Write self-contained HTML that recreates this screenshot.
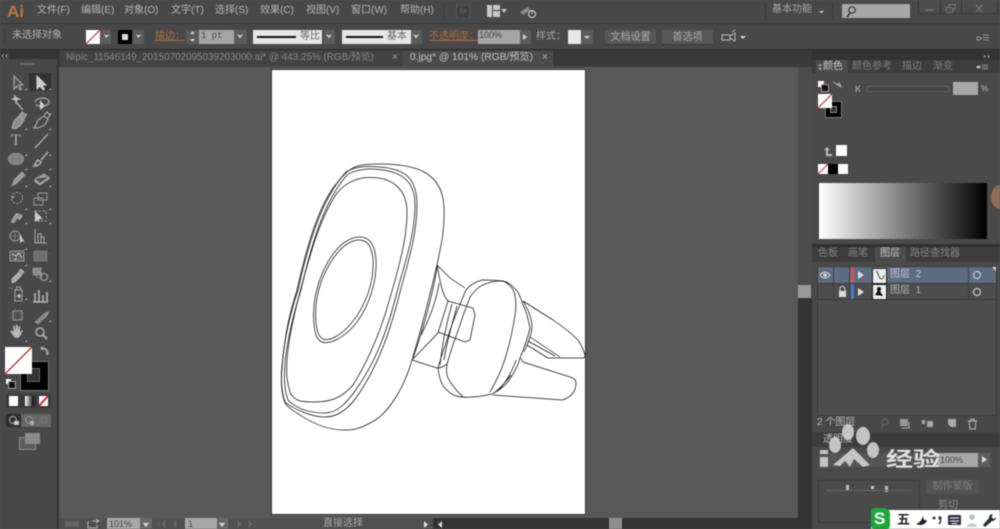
<!DOCTYPE html>
<html><head><meta charset="utf-8">
<style>
html,body{margin:0;padding:0;background:#595959;}
#r{position:relative;width:1000px;height:529px;overflow:hidden;background:#595959;font-family:"Liberation Sans","Noto Sans CJK SC",sans-serif;font-size:10px;color:#c4c4c4;filter:blur(.4px);}
#r div{position:absolute;}
.t{white-space:nowrap;line-height:12px;}
svg{position:absolute;overflow:visible;}
</style></head><body>
<div id="r">
<!-- menu bar -->
<div style="left:0;top:0;width:1000px;height:23px;background:#484848"></div>
<div style="left:0;top:23px;width:1000px;height:1px;background:#333"></div>
<div class="t" style="left:7px;top:2px;font-size:17px;line-height:20px;font-weight:bold;color:#b5794a">Ai</div>
<div class="t" style="left:37px;top:5px;color:#b5b5b5">文件(F)</div>
<div class="t" style="left:81px;top:5px;color:#b5b5b5">编辑(E)</div>
<div class="t" style="left:124px;top:5px;color:#b5b5b5">对象(O)</div>
<div class="t" style="left:171px;top:5px;color:#b5b5b5">文字(T)</div>
<div class="t" style="left:215px;top:5px;color:#b5b5b5">选择(S)</div>
<div class="t" style="left:260px;top:5px;color:#b5b5b5">效果(C)</div>
<div class="t" style="left:306px;top:5px;color:#b5b5b5">视图(V)</div>
<div class="t" style="left:351px;top:5px;color:#b5b5b5">窗口(W)</div>
<div class="t" style="left:400px;top:5px;color:#b5b5b5">帮助(H)</div>
<div style="left:443px;top:4px;width:1px;height:15px;background:#3c3c3c"></div>
<div class="t" style="left:456px;top:5px;width:12px;height:12px;background:#414141;border:1px solid #555;color:#666;font-size:7px;text-align:center">Br</div>
<div style="left:487px;top:5px;width:13px;height:12px;background:#c8c8c8"></div>
<div style="left:492px;top:5px;width:1px;height:12px;background:#444"></div>
<div style="left:493px;top:10px;width:7px;height:1px;background:#444"></div>
<svg style="left:0;top:0" width="1000" height="24">
<path d="M501 9h6l-3 4z" fill="#c4c4c4"/>
<path d="M520 12l8-5 2 3-7 5z" fill="#8a8a8a"/>
<circle cx="532" cy="14" r="3.500" fill="none" stroke="#c4c4c4" stroke-width="1.200"/><path d="M532 10v4" stroke="#c4c4c4"/>
<path d="M819 11h5l-2.500 2.500z" fill="#c4c4c4"/>
</svg>
<div class="t" style="left:772px;top:4px;color:#a8a8a8">基本功能</div>
<div style="left:765px;top:4px;width:1px;height:15px;background:#3c3c3c"></div>
<div style="left:832px;top:4px;width:1px;height:15px;background:#3c3c3c"></div>
<div style="left:842px;top:4px;width:68px;height:14px;background:#a6a6a6"></div>
<svg style="left:845px;top:5px" width="14" height="14"><circle cx="7" cy="5" r="3.200" fill="none" stroke="#333" stroke-width="1.200"/><path d="M5 8l-3 4" stroke="#333" stroke-width="1.500"/></svg>
<div style="left:918px;top:0;width:80px;height:14px;background:#4c4c4c;border:1px solid #3a3a3a;border-top:0;border-radius:0 0 2px 2px;box-sizing:border-box"></div>
<div style="left:940px;top:0;width:1px;height:14px;background:#3a3a3a"></div>
<div style="left:961px;top:0;width:1px;height:14px;background:#3a3a3a"></div>
<div style="left:925px;top:9px;width:8px;height:2px;background:#6e6e6e"></div>
<svg style="left:946px;top:4px" width="40" height="10"><path d="M0.500 3.500h6v5h-6zM3 3V0.500h6v5H7" fill="none" stroke="#767676"/><path d="M30 1l6 7M36 1l-6 7" stroke="#767676" stroke-width="1.300"/></svg>
<!-- control bar -->
<div style="left:0;top:24px;width:1000px;height:26px;background:#484848"></div>
<div style="left:0;top:49px;width:1000px;height:1px;background:#2e2e2e"></div>
<div style="left:4px;top:29px;width:1px;height:15px;background:#3a3a3a"></div>
<div class="t" style="left:12px;top:30px;color:#b0b0b0">未选择对象</div>
<div style="left:86px;top:30px;width:14px;height:14px;background:#fff"></div>
<svg style="left:86px;top:30px" width="14" height="14"><path d="M0 14L14 0" stroke="#c8363b" stroke-width="1.200"/></svg>
<div style="left:101px;top:30px;width:10px;height:14px;background:#5d5d5d"></div>
<div style="left:118px;top:30px;width:14px;height:14px;background:#000"></div>
<div style="left:122px;top:34px;width:6px;height:6px;background:#ddd"></div>
<div style="left:133px;top:30px;width:11px;height:14px;background:#5d5d5d"></div>
<div class="t" style="left:155px;top:31px;color:#a8703c;text-decoration:underline">描边：</div>
<div style="left:186px;top:30px;width:13px;height:14px;background:#5a5a5a"></div>
<div class="t" style="left:199px;top:30px;width:35px;height:14px;background:#a5a5a5;color:#444;font-size:9px;padding-left:2px;box-sizing:border-box;line-height:13px;font-family:'Liberation Mono',monospace">1 pt</div>
<div style="left:234px;top:30px;width:13px;height:14px;background:#5c5c5c"></div>
<div style="left:253px;top:30px;width:69px;height:14px;background:#e6e6e6"></div>
<div style="left:257px;top:36px;width:39px;height:2px;background:#111"></div>
<div class="t" style="left:300px;top:31px;color:#666">等比</div>
<div style="left:324px;top:30px;width:11px;height:14px;background:#5c5c5c"></div>
<div style="left:342px;top:30px;width:69px;height:14px;background:#e6e6e6"></div>
<div style="left:346px;top:36px;width:37px;height:2px;background:#111"></div>
<div class="t" style="left:387px;top:31px;color:#666">基本</div>
<div style="left:411px;top:30px;width:11px;height:14px;background:#5c5c5c"></div>
<div class="t" style="left:429px;top:31px;color:#a8703c;text-decoration:underline">不透明度：</div>
<div class="t" style="left:478px;top:30px;width:42px;height:14px;background:#a5a5a5;color:#444;font-size:9px;line-height:11px;padding-left:1px;box-sizing:border-box">100%</div>
<div style="left:520px;top:30px;width:11px;height:14px;background:#5c5c5c"></div>
<div class="t" style="left:536px;top:31px;color:#a8a8a8">样式：</div>
<div style="left:568px;top:30px;width:13px;height:14px;background:#e8e8e8"></div>
<div style="left:582px;top:30px;width:11px;height:14px;background:#5c5c5c"></div>
<div class="t" style="left:605px;top:30px;width:51px;height:14px;background:#585858;border-bottom:1px solid #383838;text-align:center;color:#aaa;line-height:15px">文档设置</div>
<div class="t" style="left:662px;top:30px;width:51px;height:14px;background:#585858;border-bottom:1px solid #383838;text-align:center;color:#aaa;line-height:15px">首选项</div>
<svg style="left:0;top:24px" width="1000" height="26">
<path d="M104 11h5l-2.500 3zM136 11h5l-2.500 3zM237 11h6l-3 3zM326 11h6l-3 3zM413 11h6l-3 3zM584 12h6l-3 3zM523 10v6l4-3zM740 12h6l-3 3z" fill="#d0d0d0"/>
<path d="M190 10l2.500-3 2.500 3zM190 15l2.500 3 2.500-3z" fill="#ccc"/>
<path d="M722 11h8v5h-8zM730 12l5-3v8l-5-3M732 8l3-2" fill="none" stroke="#bdbdbd"/>
<path d="M977 13h3l1.500 1.500-1.500 1.500h-3zM983 11h6M983 13.500h6M983 16h6" stroke="#aaa" fill="none" stroke-width=".8"/>
</svg>
<!-- tab bar -->
<div style="left:0;top:50px;width:812px;height:17px;background:#3a3a3a"></div>
<div style="left:60px;top:51px;width:343px;height:16px;background:#424242"></div>
<div style="left:403px;top:51px;width:150px;height:16px;background:#4b4b4b"></div>
<div class="t" style="left:66px;top:52px;color:#858585;font-size:9.900px">Nipic_11546149_20150702095039203000.ai* @ 443.25% (RGB/预览)</div>
<div class="t" style="left:392px;top:52px;color:#aaa;font-size:10px">×</div>
<div class="t" style="left:410px;top:52px;color:#c4c4c4;font-size:10.200px">0.jpg* @ 101% (RGB/预览)</div>
<div class="t" style="left:542px;top:52px;color:#bbb;font-size:10px">×</div>
<!-- canvas -->
<div style="left:58px;top:67px;width:740px;height:451px;background:#595959"></div>
<div style="left:272px;top:70px;width:313px;height:444px;background:#fff;box-shadow:0 0 0 1px #333"></div>
<svg style="left:0;top:0" width="1000" height="529" fill="none" stroke="#111" stroke-width=".75">
<!-- outer -->
<path d="M380 164C412 164 443 170 444 208C445 232 440 250 437 265C430 295 421 330 412 360C404 388 388 415 370 423C358 430 350 430 345 430C330 430 315 425 300 415C290 409 285 405 284 400C281 390 281 378 282 368C283 350 287 327 290 315C292 305 295 297 297 290C306 250 318 205 337 183C343 175 350 168 358 166C366 164 372 164 380 164Z"/>
<!-- ring 2 -->
<path d="M346 172C355 166 368 166 380 167C405 169 417 178 417 205C417 235 408 262 400 292C392 325 380 362 360 392C350 408 338 417 325 417C312 417 295 410 285 402C281 390 281 375 282 365C285 335 290 315 298 290C307 250 320 200 346 172Z"/>
<path d="M347 175C356 169 370 168 383 170C403 173 415 182 415 205C415 235 405 262 397 292C389 325 377 360 357 388C347 403 337 413 325 413C312 413 298 410 288 400C284 390 284 375 285 362C288 335 294 312 301 290C310 250 323 202 347 175Z"/>
<!-- inner ring -->
<path d="M370 177.500C393 177 407 190 407 212C407 240 398 270 390 298C384 320 372 355 353 385C342 398 330 402 315 402C303 402 294 402 290 392C286 380 286 365 288 350C291 325 298 298 306 270C313 245 322 215 337 193C345 183 358 177 370 177.500Z"/>
<!-- ellipse -->
<path d="M360 237C372 237 377 250 376 268C375 290 365 315 350 330C338 341 328 344 322 342C313 339 313 320 314 305C316 285 325 262 338 248C346 240 354 237 360 237Z"/>
<path d="M359 240C370 240 374 252 373 268C372 290 362 312 348 327C337 338 328 341 323 339C316 336 315 320 316 305C318 285 327 264 340 250C347 243 354 240 359 240Z"/>
<!-- cone -->
<path d="M437 265C436 280 425 325 413 358M437 265C440 280 442 295 448 301L438 333L413 359M437 265L450 278L465 288M439 283C437 300 428 322 421 335M412 360L437 368C441 368 445 366 447 364"/>
<!-- neck -->
<path d="M448 301L473 308L475 315L470 340L465 342L438 332M452 304C446 325 442 345 440 365M457 306C452 325 447 340 444 360"/>
<!-- clip outer ring -->
<path d="M482 280C472 283 467 288 465 292C460 305 452 322 447 340C443 352 440 360 438 368C439 378 442 385 445 388C450 394 456 397 463 397C472 398 483 396 492 394C500 390 503 387 507 383C513 375 518 366 520 358C524 348 528 338 530 328C528 318 526 310 523 305C521 298 519 295 518 292C512 285 508 282 503 281C495 280 488 280 482 280Z"/>
<!-- clip face -->
<path d="M488 283C480 285 475 290 470 297C466 308 462 318 460 325C454 342 449 355 447 365C446 372 447 376 448 378C452 386 458 392 463 397M503 281C510 284 514 290 515 295C516 302 516 310 515 315C513 328 510 342 507 352C503 368 497 380 490 392M488 283C493 281 498 281 503 281"/>
<path d="M511 375C505 383 499 389 494 393M516 360C512 372 506 382 498 391"/>
<!-- arms -->
<path d="M523 301L553 320C565 328 572 334 578 340C582 346 584 351 585 355C585 357 584 358 583 358L573 358M523 301C527 308 531 315 532 325C532 330 531 334 530 337"/>
<path d="M530 337L560 357M528 341L555 356M527 345L548 358L573 358M530 337L527 345M524 352L527 345"/>
<path d="M523 362L570 377C574 378 576 380 576 383C576 387 575 390 573 393C570 397 566 399 562 400L493 395M521 358L523 362"/>
</svg>
<!-- bottom status -->
<div style="left:58px;top:518px;width:740px;height:11px;background:#505050"></div>
<div class="t" style="left:107px;top:518px;width:33px;height:11px;background:#a8a8a8;color:#444;font-size:9px;padding-left:2px;box-sizing:border-box">101%</div>
<div style="left:140px;top:518px;width:12px;height:11px;background:#686868"></div>
<div class="t" style="left:185px;top:518px;width:32px;height:11px;background:#a8a8a8;color:#444;font-size:9px;padding-left:3px;box-sizing:border-box">1</div>
<div style="left:217px;top:518px;width:11px;height:11px;background:#686868"></div>
<div class="t" style="left:323px;top:518px;color:#a8a8a8;font-size:10px">直接选择</div>
<div style="left:433px;top:518px;width:365px;height:11px;background:#333"></div>
<div style="left:609px;top:518px;width:13px;height:11px;background:#8f8f8f"></div>
<svg style="left:0;top:518px" width="800" height="11">
<path d="M424 3v7l4-3.500zM442 3l-4 3.500 4 3.500z" fill="#ddd"/>
<rect x="65" y="3" width="14" height="6" fill="#646464"/>
<path d="M88 3v7h9V7M92 3h6M96 1l3 2-3 2" stroke="#b5b5b5" fill="none"/>
<path d="M143 5h6l-3 4zM219 5h6l-3 4z" fill="#ddd"/>
<path d="M159 3v6M165 3l-3 3 3 3zM176 3l-3 3 3 3zM238 3l3 3-3 3zM249 3l3 3-3 3zM255 3v6" fill="#6a6a6a" stroke="#6a6a6a" stroke-width=".6"/>
</svg>
<!-- vscroll -->
<div style="left:798px;top:67px;width:14px;height:462px;background:#444"></div>
<div style="left:798px;top:67px;width:14px;height:218px;background:#4c4c4c"></div>
<div style="left:798px;top:285px;width:13px;height:13px;background:#9a9a9a"></div>
<div style="left:798px;top:298px;width:14px;height:231px;background:#333"></div>
<!-- left tools -->
<div style="left:0;top:50px;width:57px;height:479px;background:#484848"></div>
<div style="left:0;top:50px;width:57px;height:9px;background:#353535"></div>
<div style="left:57px;top:50px;width:2px;height:479px;background:#333"></div>
<div style="left:20px;top:63px;width:15px;height:2px;background:#6a6a6a"></div>
<div style="left:29px;top:73px;width:22px;height:18px;background:#343434"></div>
<svg style="left:0;top:50px" width="57" height="479" fill="none" stroke="#adadad">
<path d="M4 4l-2 2 2 2M8 4L6 6l2 2" stroke="#aaa" stroke-width=".8"/>
<g stroke="#3c3c3c"><path d="M7 62.500h44M7 140.500h44M7 200.500h44M7 247.500h44" stroke-width=".7"/></g>
<path d="M14 26v13l3-3 3 4 1.500-1-2.500-4h4z" fill="#555"/>
<path d="M37 26v13l3-3 3 4 1.500-1-2.500-4h4z" fill="#cfcfcf" stroke="#cfcfcf"/>
<path d="M16 52l7 8" stroke-width="1.500"/><path d="M14 45l1 3-3 1 3 1 1 3 1-3 3-1-3-1z" fill="#ccc"/>
<path d="M35 52c2-5 12-5 14-1 1 4-8 7-13 4" stroke-width="1.300"/><path d="M40 50v10l5-4z" fill="#ccc" stroke="none"/>
<path d="M12 78l2-7 5-5 5 4-4 6-5 3zM19 66l3-4 4 3-2 4" fill="#8e8e8e" stroke-width="1"/>
<path d="M33 78c3 0 3-5 5-8l6-4 4 3-3 6-7 3zM44 65l3-3 3 3-2 3" stroke-width="1.100"/>
<text x="11" y="95" font-family="Liberation Serif" font-size="16" fill="#adadad" stroke="none">T</text>
<path d="M35 98l13-14" stroke-width="1.300"/>
<ellipse cx="16" cy="109" rx="7.500" ry="5.500" fill="#7f7f7f" stroke="#999"/>
<path d="M34 116c3 0 6-1 7-4l-3-2c-2 1-2 4-4 6zM41 110l7-8" stroke-width="1.600"/>
<path d="M12 136l2-6 8-8 3 3-8 8z" fill="#999" stroke="#aaa" stroke-width=".7"/>
<path d="M35 129l9-5 5 3-9 6zM35 129v3l5 3 9-6v-2" fill="#999" stroke="#aaa" stroke-width=".7"/>
<circle cx="17" cy="148" r="5.500" stroke-dasharray="2 1.500" stroke="#999"/><path d="M11 146l2 3 2-3" fill="#999" stroke="none"/>
<rect x="34" y="148" width="9" height="7" stroke="#999"/><rect x="38" y="143" width="9" height="7" stroke="#999"/>
<path d="M11 172c2-3 3-7 6-9 1 2 6 1 5 4l-3 3-2-2-3 5z" fill="#999" stroke="#aaa" stroke-width=".7"/>
<path d="M35 161v11l3-2 2 3-1-4h4z" fill="#ccc" stroke="none"/><rect x="35" y="161" width="11" height="10" stroke-dasharray="2 2" stroke="#aaa"/>
<circle cx="15" cy="186" r="5" stroke="#999"/><path d="M11 186h9M15 181v10" stroke="#999" stroke-width=".6"/><path d="M20 184v9l3-2 2 2z" fill="#ccc" stroke="none"/>
<path d="M35 179v14h12M38 193v-9h3v9M41 193v-6h3v6" stroke="#aaa"/>
<rect x="10" y="201" width="14" height="10" fill="#5e5e5e" stroke="#aaa" stroke-width=".8"/><path d="M12 204l4 2 3-3 3 5M14 210l3-2" stroke="#ddd" stroke-width=".9"/>
<rect x="34" y="201" width="13" height="10" fill="#707070" stroke="#888" stroke-width=".5"/>
<path d="M12 229l7-7 3 3-7 7-3 1zM19 221l2-2 3 3-2 2" fill="#aaa" stroke="#c5c5c5" stroke-width=".7"/>
<rect x="33" y="218" width="8" height="7" fill="#8a8a8a" stroke="#aaa" stroke-width=".5"/><circle cx="44" cy="227" r="3.500" stroke="#aaa"/><circle cx="39" cy="225" r="3" stroke="#aaa" stroke-width=".6"/>
<path d="M15 240h7v11h-7zM16 240l1-3h3l1 3" stroke="#aaa"/><circle cx="19" cy="246" r="1.500" fill="#ccc"/><path d="M9 238h4" stroke="#777"/>
<path d="M35 252v-9M39 252v-12M43 252v-7M47 252v-10M33 252h15" stroke="#b5b5b5" stroke-width="1.600"/>
<rect x="13" y="261" width="9" height="9" stroke="#999"/><path d="M10 263h14M10 268h14M15 258v14M20 258v14" stroke="#777" stroke-width=".5"/>
<path d="M35 272l10-9 4-1-2 4-9 8z" fill="#8a8a8a" stroke="#999" stroke-width=".6"/>
<path d="M13 285c-2-2-3-4-2-5 1 0 3 2 3 2l-1-6c1-1 2 0 2 1l1 3v-5c1-1 2 0 2 1v4l1-4c1 0 2 1 1 2v4l2-2c1 0 1 1 0 2-1 3-3 6-5 6-2 0-3-1-4-3z" fill="#b8b8b8" stroke="none"/>
<circle cx="40" cy="282" r="4" stroke-width="1.500"/><path d="M43 285l4 4" stroke-width="2"/>
<g fill="#ccc" stroke="none"><path d="M25 40l2-2v2zM49 40l2-2v2zM25 65l2-2v2zM49 65l2-2v2zM25 80l2-2v2zM49 80l2-2v2zM25 106l2-2v2zM49 106l2-2v2zM25 120l2-2v2zM49 120l2-2v2zM25 137l2-2v2zM49 137l2-2v2zM25 160l2-2v2zM49 160l2-2v2zM25 174l2-2v2zM49 174l2-2v2zM25 200l2-2v2zM25 216l2-2v2zM49 232l2-2v2zM25 250l2-2v2zM49 272l2-2v2zM25 292l2-2v2z"/></g>
</svg>
<!-- fill stroke -->
<div style="left:20px;top:361px;width:27px;height:28px;background:#000;border:1px solid #777"></div>
<div style="left:27px;top:368px;width:11px;height:12px;border:1px solid #666;background:#333"></div>
<div style="left:5px;top:347px;width:27px;height:27px;background:#fff"></div>
<svg style="left:5px;top:347px" width="28" height="28"><path d="M0 27L27 0" stroke="#b8343a" stroke-width="1.300"/></svg>
<svg style="left:0;top:340px" width="57" height="50"><path d="M40 8l3-2v1.500c3 0 5 2 5 5h1.500l-2 3-2-3h1c0-1.500-1.500-3-3.500-3V11z" fill="#aaa"/></svg>
<div style="left:6px;top:379px;width:5px;height:5px;background:#fff"></div>
<div style="left:8px;top:381px;width:6px;height:6px;background:#111;border:1px solid #aaa"></div>
<div style="left:6px;top:394px;width:45px;height:14px;background:#3a3a3a"></div>
<div style="left:9px;top:396px;width:9px;height:10px;background:#fff"></div>
<div style="left:25px;top:396px;width:9px;height:10px;background:linear-gradient(90deg,#fff,#000)"></div>
<div style="left:39px;top:396px;width:9px;height:10px;background:#fff"></div>
<svg style="left:39px;top:396px" width="9" height="10"><path d="M0 10L9 0" stroke="#d01c23" stroke-width="1.800"/></svg>
<div style="left:6px;top:414px;width:15px;height:13px;background:#2d2d2d"></div>
<div style="left:21px;top:414px;width:30px;height:13px;background:#666"></div>
<svg style="left:6px;top:414px" width="46" height="13" fill="none"><circle cx="7" cy="6" r="3.500" stroke="#aaa"/><rect x="8" y="7" width="5" height="4" fill="#ccc"/><circle cx="23" cy="6" r="3.500" stroke="#999"/><rect x="24" y="7" width="4" height="4" fill="#aaa"/><circle cx="38" cy="6" r="3" stroke="#7b7b7b"/></svg>
<div style="left:19px;top:437px;width:15px;height:11px;border:1px solid #8d8d8d;background:#5c5c5c"></div>
<div style="left:25px;top:433px;width:15px;height:11px;background:#8a8a8a"></div>
<!-- right panel -->
<div style="left:812px;top:50px;width:188px;height:479px;background:#4a4a4a"></div>
<div style="left:812px;top:50px;width:188px;height:10px;background:#333"></div>
<div style="left:812px;top:60px;width:188px;height:13px;background:#3d3d3d"></div>
<div style="left:816px;top:60px;width:32px;height:13px;background:#4c4c4c"></div>
<div class="t" style="left:823px;top:61px;color:#c4c4c4">颜色</div>
<div class="t" style="left:852px;top:61px;color:#7e7e7e">颜色参考</div>
<div class="t" style="left:902px;top:61px;color:#7e7e7e">描边</div>
<div class="t" style="left:933px;top:61px;color:#7e7e7e">渐变</div>
<svg style="left:812px;top:50px" width="188" height="30"><path d="M172 5l2 1.500-2 1.500zM176 5l2 1.500-2 1.500z" fill="#aaa"/><path d="M6 16l2-2 2 2zM6 18l2 2 2-2z" fill="#bbb"/><path d="M165 16h3v2h-3zM170 15h6M170 17h6M170 19h6" stroke="#aaa" fill="#ccc" stroke-width=".8"/></svg>
<div style="left:818px;top:81px;width:6px;height:6px;background:#fff"></div>
<div style="left:821px;top:84px;width:6px;height:6px;background:#111;border:1px solid #999"></div>
<svg style="left:832px;top:80px" width="12" height="10"><path d="M1 2l3 2 3 0 2 3M7 2L9 7 4 4" stroke="#aaa" fill="none"/></svg>
<div style="left:825px;top:101px;width:15px;height:15px;background:#000;border:1px solid #777"></div>
<div style="left:830px;top:106px;width:5px;height:5px;border:1px solid #888;background:#333"></div>
<div style="left:818px;top:94px;width:14px;height:14px;background:#fff"></div>
<svg style="left:818px;top:94px" width="15" height="15"><path d="M0 14L14 0" stroke="#c43238" stroke-width="1.200"/></svg>
<div class="t" style="left:855px;top:83px;color:#bbb;font-size:9px">K</div>
<div style="left:867px;top:86px;width:80px;height:4px;background:#444;border:1px solid #5c5c5c"></div>
<div style="left:953px;top:82px;width:25px;height:13px;background:#a8a8a8"></div>
<div class="t" style="left:981px;top:83px;color:#bbb;font-size:8px">%</div>
<svg style="left:822px;top:147px" width="12" height="12"><path d="M4 9V3H2l3-3 3 3H6v4h4v2z" fill="#bdbdbd"/></svg>
<div style="left:836px;top:145px;width:11px;height:11px;background:#fff"></div>
<div style="left:818px;top:164px;width:10px;height:10px;background:#fff"></div>
<svg style="left:818px;top:164px" width="10" height="10"><path d="M0 10L10 0" stroke="#c43238"/></svg>
<div style="left:828px;top:164px;width:10px;height:10px;background:#000"></div>
<div style="left:838px;top:164px;width:10px;height:10px;background:#fff"></div>
<div style="left:819px;top:183px;width:168px;height:56px;background:linear-gradient(90deg,#fff,#000)"></div>
<div style="left:991px;top:185px;width:18px;height:24px;border-radius:50%;background:#8d6e56"></div>
<!-- layers -->
<div style="left:812px;top:244px;width:188px;height:3px;background:#303030"></div>
<div style="left:812px;top:247px;width:188px;height:15px;background:#3d3d3d"></div>
<div style="left:875px;top:247px;width:31px;height:15px;background:#4c4c4c"></div>
<div class="t" style="left:818px;top:248px;color:#828282">色板</div>
<div class="t" style="left:848px;top:248px;color:#828282">画笔</div>
<div class="t" style="left:880px;top:248px;color:#c4c4c4">图层</div>
<div class="t" style="left:910px;top:248px;color:#828282">路径查找器</div>
<div style="left:817px;top:266px;width:180px;height:150px;background:#4d4d4d;border:1px solid #3b3b3b;box-sizing:border-box"></div>
<div style="left:818px;top:267px;width:178px;height:16px;background:#5e6c80"></div>
<div style="left:818px;top:283px;width:178px;height:1px;background:#3b3b3b"></div>
<div style="left:818px;top:299px;width:178px;height:1px;background:#3b3b3b"></div>
<div style="left:833px;top:267px;width:1px;height:33px;background:#3f3f3f"></div>
<div style="left:849px;top:267px;width:1px;height:33px;background:#3f3f3f"></div>
<div style="left:968px;top:267px;width:1px;height:33px;background:#3f3f3f"></div>
<div style="left:851px;top:267px;width:3px;height:16px;background:#d9534f"></div>
<div style="left:851px;top:284px;width:3px;height:15px;background:#4a78d6"></div>
<div style="left:872px;top:268px;width:13px;height:14px;background:#eee;border:1px solid #222"></div>
<div style="left:872px;top:284px;width:13px;height:14px;background:#eee;border:1px solid #222"></div>
<svg style="left:810px;top:260px" width="190" height="45" fill="none">
<path d="M10 15c3-4 7-4 10 0-3 4-7 4-10 0z" stroke="#ddd"/><circle cx="15" cy="15" r="1.800" fill="#ddd"/>
<rect x="29" y="31" width="7" height="6" fill="#ddd"/><path d="M30 31v-2a2.500 2.500 0 015 0v2" stroke="#ddd"/>
<path d="M48 11v8l6-4zM48 28v8l6-4z" fill="#ddd"/>
<path d="M66 11c2 0 3 8 5 8s3-2 3-4" stroke="#444"/><path d="M65 35l3-5 2 1 3 5z" fill="#111"/><circle cx="69" cy="29" r="2" fill="#111"/>
<circle cx="167" cy="15" r="3.500" stroke="#ddd"/><circle cx="167" cy="32" r="3.500" stroke="#ddd"/>
<path d="M182 7h4v4z" fill="#ddd"/>
</svg>
<div class="t" style="left:890px;top:269px;color:#c4c4c4">图层&nbsp; 2</div>
<div class="t" style="left:890px;top:285px;color:#b0b0b0">图层&nbsp; 1</div>
<div style="left:812px;top:416px;width:188px;height:14px;background:#484848"></div>
<div class="t" style="left:817px;top:417px;color:#b5b5b5">2 个图层</div>
<svg style="left:880px;top:418px" width="110" height="12" fill="none"><circle cx="5" cy="4" r="3" stroke="#666"/><path d="M3 7l-2 3" stroke="#666"/><rect x="20" y="1" width="8" height="7" fill="#999"/><path d="M29 4v6h-7" stroke="#aaa"/><path d="M42 2h3v4h-3zM47 3h6v6h-6z" fill="#aaa"/><path d="M68 1h8v8h-5l-3-3z" fill="#aaa"/><path d="M88 3h9M89 3l1 8h5l1-8M91 3V1h3v2" stroke="#bbb"/></svg>
<div style="left:812px;top:430px;width:188px;height:99px;background:#4a4a4a"></div>
<div style="left:812px;top:432px;width:188px;height:15px;background:#3c3c3c"></div>
<div class="t" style="left:823px;top:434px;color:#bbb">透明度</div>
<div style="left:819px;top:453px;width:117px;height:14px;background:#555"></div>
<div style="left:936px;top:453px;width:42px;height:14px;background:#a8a8a8"></div>
<div class="t" style="left:940px;top:454px;color:#444;font-size:9px">100%</div>
<div style="left:978px;top:453px;width:12px;height:14px;background:#5e5e5e"></div>
<svg style="left:982px;top:456px" width="8" height="8"><path d="M0 0v7l5-3.500z" fill="#ddd"/></svg>
<div style="left:818px;top:480px;width:102px;height:43px;border:1px solid #3c3c3c;box-sizing:border-box"></div>
<div style="left:846px;top:485px;width:3px;height:6px;background:#bbb"></div>
<div style="left:871px;top:486px;width:3px;height:3px;background:#ccc"></div>
<div style="left:885px;top:486px;width:3px;height:6px;background:#bbb"></div>
<div style="left:826px;top:490px;width:86px;height:1px;background:#666"></div>
<div class="t" style="left:926px;top:480px;width:53px;height:14px;background:#535353;color:#7e7e7e;text-align:center;line-height:14px">制作蒙版</div>
<div class="t" style="left:938px;top:500px;color:#8a8a8a;font-size:10px">剪切</div>
<!-- watermark -->
<svg style="left:0;top:0" width="1000" height="529">
<g fill="#cfcfcf" stroke="none" opacity=".92">
<ellipse cx="848" cy="432" rx="6" ry="8"/>
<ellipse cx="863" cy="436" rx="7" ry="9"/>
<ellipse cx="835" cy="445" rx="6" ry="8"/>
<ellipse cx="873" cy="450" rx="6" ry="8"/>
<path d="M833 465l20-17 17 17-7 2-9-8-4 8-5-6-5 5zM820 450h8v4h-8zM820 457h8v10h-8z"/>
</g>
<text x="886" y="466" font-family="Liberation Sans,Noto Sans CJK SC,sans-serif" font-size="20" font-weight="bold" fill="#e0e0e0" textLength="54" lengthAdjust="spacingAndGlyphs">经验</text>
</svg>
<!-- IME -->
<div style="left:871px;top:510px;width:129px;height:19px;background:#fff"></div>
<div style="left:871px;top:508px;width:19px;height:21px;background:#1ea83c;border-radius:3px 6px 3px 3px"></div>
<div class="t" style="left:874px;top:509px;font-size:17px;line-height:20px;font-weight:bold;color:#fff">S</div>
<div class="t" style="left:897px;top:512px;font-size:13px;line-height:16px;font-weight:bold;color:#222">五</div>
<svg style="left:912px;top:510px" width="88" height="19">
<path d="M5 4c-1 6-4 8-7 9 4 2 10 1 11-4-2 1-4 0-4-5z" transform="translate(6 1)" fill="#223"/>
<circle cx="22" cy="8" r="1.500" fill="#334"/><path d="M28 9c1 1 1 3-1 5M29 8a1 1 0 110-.1" stroke="#334" stroke-width="1.500" fill="none"/>
<rect x="36" y="5" width="13" height="10" fill="#334" rx="1"/><path d="M38 8h9M38 11h9M40 13.500h5" stroke="#fff"/>
<circle cx="60" cy="7" r="2.800" fill="#a9c6c6"/><path d="M55 17c0-5 10-5 10 0z" fill="#b9d0d0"/>
<path d="M84 3c-3 0-4 2-4 4l-6 7 2 2 7-6c2 0 4-1 4-4l-2 2-2-1 0-2z" transform="translate(-3 1)" fill="#233"/>
</svg>
</div>
</body></html>
